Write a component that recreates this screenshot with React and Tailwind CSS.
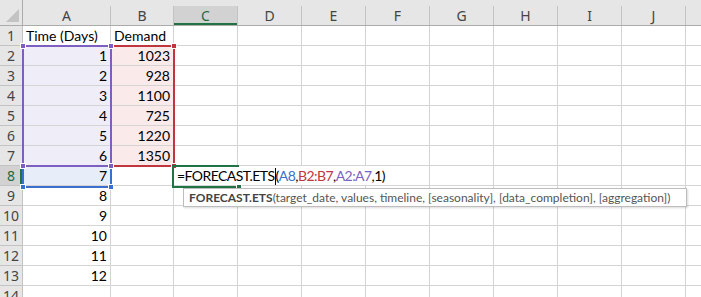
import React from 'react'

const colWidths = ['w-[88px]', 'w-[63px]', 'w-[64px]', 'w-[64px]', 'w-[64px]', 'w-[64px]', 'w-[64px]', 'w-[64px]', 'w-[64px]', 'w-[64px]']
const letters = ['A', 'B', 'C', 'D', 'E', 'F', 'G', 'H', 'I', 'J', 'K']

const data = {
  1: ['Time (Days)', 'Demand'],
  2: [1, 1023],
  3: [2, 928],
  4: [3, 1100],
  5: [4, 725],
  6: [5, 1220],
  7: [6, 1350],
  8: [7, ''],
  9: [8, ''],
  10: [9, ''],
  11: [10, ''],
  12: [11, ''],
  13: [12, ''],
  14: ['', ''],
}

function Handle({ className }) {
  return <div className={`absolute w-[6px] h-[6px] border border-white ${className}`} />
}

function Formula() {
  return (
    <span className="relative z-10 whitespace-nowrap tracking-[-0.55px]">
      =FORECAST.ETS
      <span className="inline-block w-px h-[17px] bg-black align-[-4px]" />
      (<span className="text-[#3a6fcf]">A8</span>,<span className="text-[#c0353e]">B2:B7</span>,
      <span className="text-[#7d5fc2]">A2:A7</span>,1)
    </span>
  )
}

function Cell({ row, col }) {
  const inRange = row >= 2 && row <= 7
  let bg = 'bg-white'
  if (col === 0 && inRange) bg = 'bg-[#efedf7]'
  if (col === 1 && inRange) bg = 'bg-[#fbeaea]'
  if (col === 0 && row === 8) bg = 'bg-[#e8eef9]'
  const noRight = row === 8 && (col === 2 || col === 3 || col === 4)
  let content = null
  let align = 'justify-end'
  if (col < 2) {
    const v = data[row][col]
    content = v
    if (typeof v === 'string') align = 'justify-start'
  }
  if (row === 8 && col === 2) {
    content = <Formula />
    align = 'justify-start'
  }
  return (
    <div
      className={`flex items-center ${align} ${bg} ${colWidths[col] || 'w-[64px]'} h-[20px] shrink-0 border-b border-[#d4d4d4] ${noRight ? '' : 'border-r'} px-[3px] overflow-visible`}
    >
      {content}
    </div>
  )
}

export default function App() {
  const rows = Array.from({ length: 14 }, (_, i) => i + 1)
  return (
    <div className="relative w-[701px] h-[297px] overflow-hidden bg-white text-black text-[14px] leading-[19px] font-['Lato',sans-serif]">
      {/* column headers */}
      <div className="flex h-[26px] bg-[#e6e6e6] border-b border-[#ababab] text-[14px] text-[#444] font-['Noto_Sans',sans-serif]">
        <div className="relative w-[23px] shrink-0 h-full border-r border-[#ababab]">
          <div className="absolute right-[3px] bottom-[3px] w-0 h-0 border-l-[13px] border-l-transparent border-b-[13px] border-b-[#c3c3c3]" />
        </div>
        {letters.map((l, i) => (
          <div key={l} className={`${colWidths[i] || 'w-[64px]'} shrink-0 h-full pt-[6px]`}>
            <div
              className={`h-full flex items-center justify-center border-r border-[#c3c3c3] ${
                l === 'C' ? 'bg-[#d2d2d2] text-[#1e6b41] shadow-[inset_0_-2px_0_#217346]' : ''
              }`}
            >
              {l}
            </div>
          </div>
        ))}
      </div>

      {/* rows */}
      {rows.map((r) => (
        <div key={r} className="flex">
          <div
            className={`w-[23px] h-[20px] shrink-0 flex items-center justify-center border-b border-r border-[#c3c3c3] text-[14px] font-['Noto_Sans',sans-serif] ${
              r === 8 ? 'bg-[#d2d2d2] text-[#1e6b41] shadow-[inset_-2px_0_0_#217346]' : 'bg-[#e6e6e6] text-[#444]'
            }`}
          >
            {r}
          </div>
          {letters.map((l, i) => (
            <Cell key={l} row={r} col={i} />
          ))}
        </div>
      ))}

      {/* reference range outlines */}
      <div className="absolute left-[22px] top-[165px] w-[90px] h-[23px] border-2 border-[#3a6fcf]">
        <Handle className="-left-[4px] -bottom-[4px] bg-[#3a6fcf]" />
        <Handle className="-right-[4px] -bottom-[4px] bg-[#3a6fcf]" />
      </div>
      <div className="absolute left-[110px] top-[45px] w-[65px] h-[122px] border-2 border-[#c0353e]">
        <Handle className="-right-[4px] -top-[4px] bg-[#c0353e]" />
        <Handle className="-right-[4px] -bottom-[4px] bg-[#c0353e]" />
      </div>
      <div className="absolute left-[22px] top-[45px] w-[90px] h-[122px] border-2 border-[#7d5fc2]">
        <Handle className="-left-[4px] -top-[4px] bg-[#7d5fc2]" />
        <Handle className="-right-[4px] -top-[4px] bg-[#7d5fc2]" />
        <Handle className="-left-[4px] -bottom-[4px] bg-[#7d5fc2]" />
        <Handle className="-right-[4px] -bottom-[4px] bg-[#7d5fc2]" />
      </div>

      {/* active cell (in edit mode, text runs past its right edge) */}
      <div className="absolute left-[172px] top-[165px] w-[67px] h-[23px] border-2 border-r-0 border-[#217346]">
        <Handle className="-right-[3px] -bottom-[4px] bg-[#217346]" />
      </div>

      {/* function tooltip */}
      <div className="absolute z-20 left-[183px] top-[188px] w-[504px] h-[19px] px-[5px] flex items-center bg-white border border-[#bdbdbd] shadow-[1px_1px_2px_rgba(0,0,0,0.15)] text-[12px] text-[#555] whitespace-nowrap font-['Lato',sans-serif]">
        <span className="font-bold text-[#444]">FORECAST.ETS</span>
        (target_date, values, timeline, [seasonality], [data_completion], [aggregation])
      </div>
    </div>
  )
}
